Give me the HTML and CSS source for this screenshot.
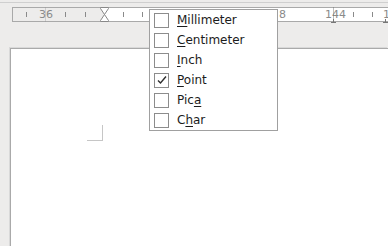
FILE: index.html
```html
<!DOCTYPE html>
<html lang="en">
<head>
  <meta charset="UTF-8" />
  <title>Ruler units</title>
  <link rel="stylesheet" href="styles.css">
</head>
<body>
  <div class="toolbar-edge"></div>

  <div class="ruler">
    <div class="ruler-margin"></div>
    <div class="ruler-body"></div>
    <!-- tick marks -->
    <span class="tick" style="left: 13px"></span>
    <span class="tick" style="left: 52px"></span>
    <span class="tick" style="left: 72px"></span>
    <span class="tick" style="left: 110px"></span>
    <span class="tick" style="left: 129px"></span>
    <span class="tick" style="left: 149px"></span>
    <span class="tick" style="left: 340px"></span>
    <span class="tick" style="left: 359px"></span>
    <span class="label" style="left: 26px">36</span>
    <span class="label" style="left: 266px">8</span>
    <span class="label" style="left: 312px">144</span>
    <span class="label" style="left: 370px">1</span>
    <span class="guide faint" style="left: 32px"></span>
    <span class="guide" style="left: 320px"></span>
    <span class="tab-stop" style="left: 318px"></span>
    <span class="tab-stop" style="left: 370px"></span>
    <svg class="indent" width="11" height="15" viewBox="0 0 11 15">
      <path d="M1.5 0.5 H9.5 V1.5 L5.5 7.5 L9.5 13.5 V14.5 H1.5 V13.5 L5.5 7.5 L1.5 1.5 Z" fill="#fff" stroke="#888" stroke-width="1"/>
    </svg>
  </div>

  <div class="page">
    <div class="corner"></div>
  </div>

  <ul class="unit-menu">
    <li><span class="check"></span><span><u>M</u>illimeter</span></li>
    <li><span class="check"></span><span><u>C</u>entimeter</span></li>
    <li><span class="check"></span><span><u>I</u>nch</span></li>
    <li>
      <span class="check">
        <svg width="12" height="12" viewBox="0 0 12 12"><path d="M2 6.5 L4.5 9 L10 2.5" fill="none" stroke="#2e2e2e" stroke-width="1.4"/></svg>
      </span>
      <span><u>P</u>oint</span>
    </li>
    <li><span class="check"></span><span>Pic<u>a</u></span></li>
    <li><span class="check"></span><span>C<u>h</u>ar</span></li>
  </ul>
</body>
</html>
```

FILE: styles.css
```css
html, body {
  margin: 0;
  width: 388px;
  height: 246px;
  overflow: hidden;
}
body {
  background: #edeceb;
  font-family: "DejaVu Sans", sans-serif;
  position: relative;
}
.toolbar-edge {
  height: 2px;
  border-bottom: 1px solid #cfcfcf;
}
.ruler {
  position: relative;
  display: flex;
  margin: 4px 0 0 12px;
  height: 13px;
  border: 1px solid #a9a9a9;
  border-right: none;
}
.ruler-margin {
  width: 91px;
  background: #edeceb;
}
.ruler-body {
  flex: 1;
  background: #fff;
}
.tick {
  position: absolute;
  top: 4px;
  width: 1px;
  height: 5px;
  background: #8a8a8a;
}
.label {
  position: absolute;
  top: 0;
  font-size: 11px;
  line-height: 13px;
  color: #8a8a8a;
}
.guide {
  position: absolute;
  top: -1px;
  width: 1px;
  height: 15px;
  background: rgba(110, 110, 110, 0.45);
}
.guide.faint {
  background: rgba(150, 150, 150, 0.35);
}
.tab-stop {
  position: absolute;
  bottom: -2px;
  width: 5px;
  height: 3px;
  border-bottom: 1px solid #777;
}
.tab-stop::before {
  content: "";
  position: absolute;
  left: 2px;
  top: 0;
  width: 1px;
  height: 3px;
  background: #777;
}
.indent {
  position: absolute;
  left: 86px;
  top: -1px;
}
.page {
  position: relative;
  margin: 26px 0 0 10px;
  height: 200px;
  background: #fff;
  border-top: 1px solid #aaa;
  border-left: 1px solid #aaa;
  box-shadow: -1px -1px 0 #d9d9d9;
}
.corner {
  position: absolute;
  left: 76px;
  top: 76px;
  width: 15px;
  height: 15px;
  border-right: 1px solid #c6c6c6;
  border-bottom: 1px solid #c6c6c6;
}
.unit-menu {
  position: absolute;
  left: 149px;
  top: 9px;
  width: 127px;
  margin: 0;
  padding: 0;
  list-style: none;
  background: #fff;
  border: 1px solid #a0a0a0;
}
.unit-menu li {
  display: flex;
  align-items: center;
  gap: 8px;
  height: 20px;
  padding-left: 4px;
  font-size: 12px;
  color: #1c1c1c;
}
.check {
  display: flex;
  align-items: center;
  justify-content: center;
  width: 13px;
  height: 13px;
  border: 1px solid #8c8c8c;
  background: #fff;
}
.unit-menu u {
  text-underline-offset: 2px;
}
```
